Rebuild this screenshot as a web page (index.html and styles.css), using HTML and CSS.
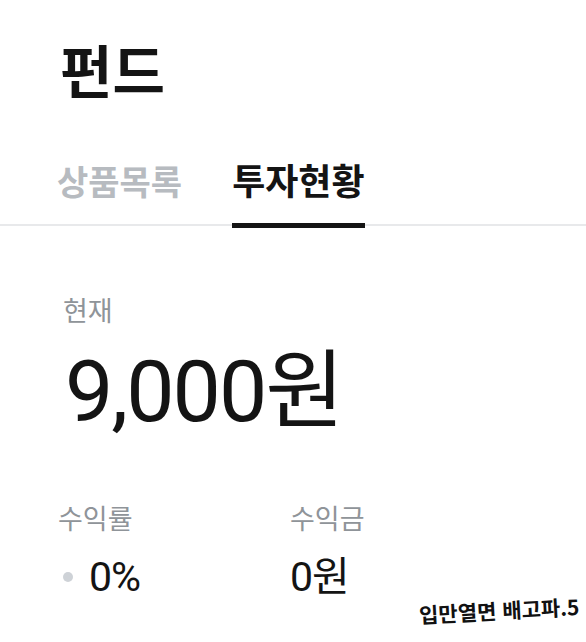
FILE: index.html
```html
<!DOCTYPE html>
<html lang="ko">
<head>
<meta charset="utf-8">
<link rel="stylesheet" href="styles.css">
</head>
<body>
<div class="page">
  <h1 class="title">펀드</h1>
  <div class="tabs">
    <div class="tab">상품목록</div>
    <div class="tab active">투자현황</div>
  </div>
  <section class="summary">
    <div class="label">현재</div>
    <div class="amount">9,000원</div>
    <div class="stats">
      <div class="stat">
        <div class="label">수익률</div>
        <div class="value"><span class="dot"></span>0%</div>
      </div>
      <div class="stat">
        <div class="label">수익금</div>
        <div class="value">0원</div>
      </div>
    </div>
  </section>
  <div class="caption">입만열면 배고파.5</div>
</div>
</body>
</html>
```
FILE: styles.css
```css
html, body {
  margin: 0;
  padding: 0;
  background: #ffffff;
}
body {
  font-family: Roboto, "Noto Sans CJK KR", sans-serif;
  color: #141414;
  width: 586px;
  height: 642px;
  overflow: hidden;
}
.page {
  position: relative;
  height: 642px;
}
.title {
  margin: 0;
  padding: 36px 0 0 60px;
  font-size: 57px;
  line-height: 76px;
  font-weight: 700;
  color: #141414;
}
.tabs {
  display: flex;
  align-items: flex-end;
  gap: 50px;
  padding: 0 0 0 57px;
  margin-top: 49px;
  border-bottom: 2px solid #e8e9eb;
}
.tab {
  font-size: 34px;
  line-height: 44px;
  font-weight: 700;
  color: #b7bbc0;
  padding-bottom: 18px;
  margin-bottom: -4px;
  border-bottom: 5px solid transparent;
}
.tab.active {
  font-size: 36px;
  color: #141414;
  border-bottom-color: #141414;
}
.summary {
  padding: 68px 0 0 63px;
}
.label {
  font-size: 27px;
  line-height: 36px;
  color: #8f9499;
}
.amount {
  font-size: 86px;
  line-height: 96px;
  margin-top: 14px;
  margin-left: 2px;
  color: #141414;
  letter-spacing: -2px;
}
.stats {
  display: flex;
  margin-top: 62px;
}
.stat {
  width: 227px;
}
.stat:first-child .label {
  margin-left: -5px;
}
.value {
  display: flex;
  align-items: center;
  font-size: 41px;
  line-height: 56px;
  margin-top: 11px;
  color: #141414;
  letter-spacing: -1px;
}
.dot {
  width: 10px;
  height: 10px;
  border-radius: 50%;
  background: #ced2d7;
  margin: 0 16px 0 0;
}
.caption {
  position: absolute;
  right: 7px;
  top: 595px;
  font-family: "Noto Sans CJK KR", sans-serif;
  font-size: 21px;
  font-weight: 700;
  color: #111;
  transform: rotate(-3deg);
}
```
